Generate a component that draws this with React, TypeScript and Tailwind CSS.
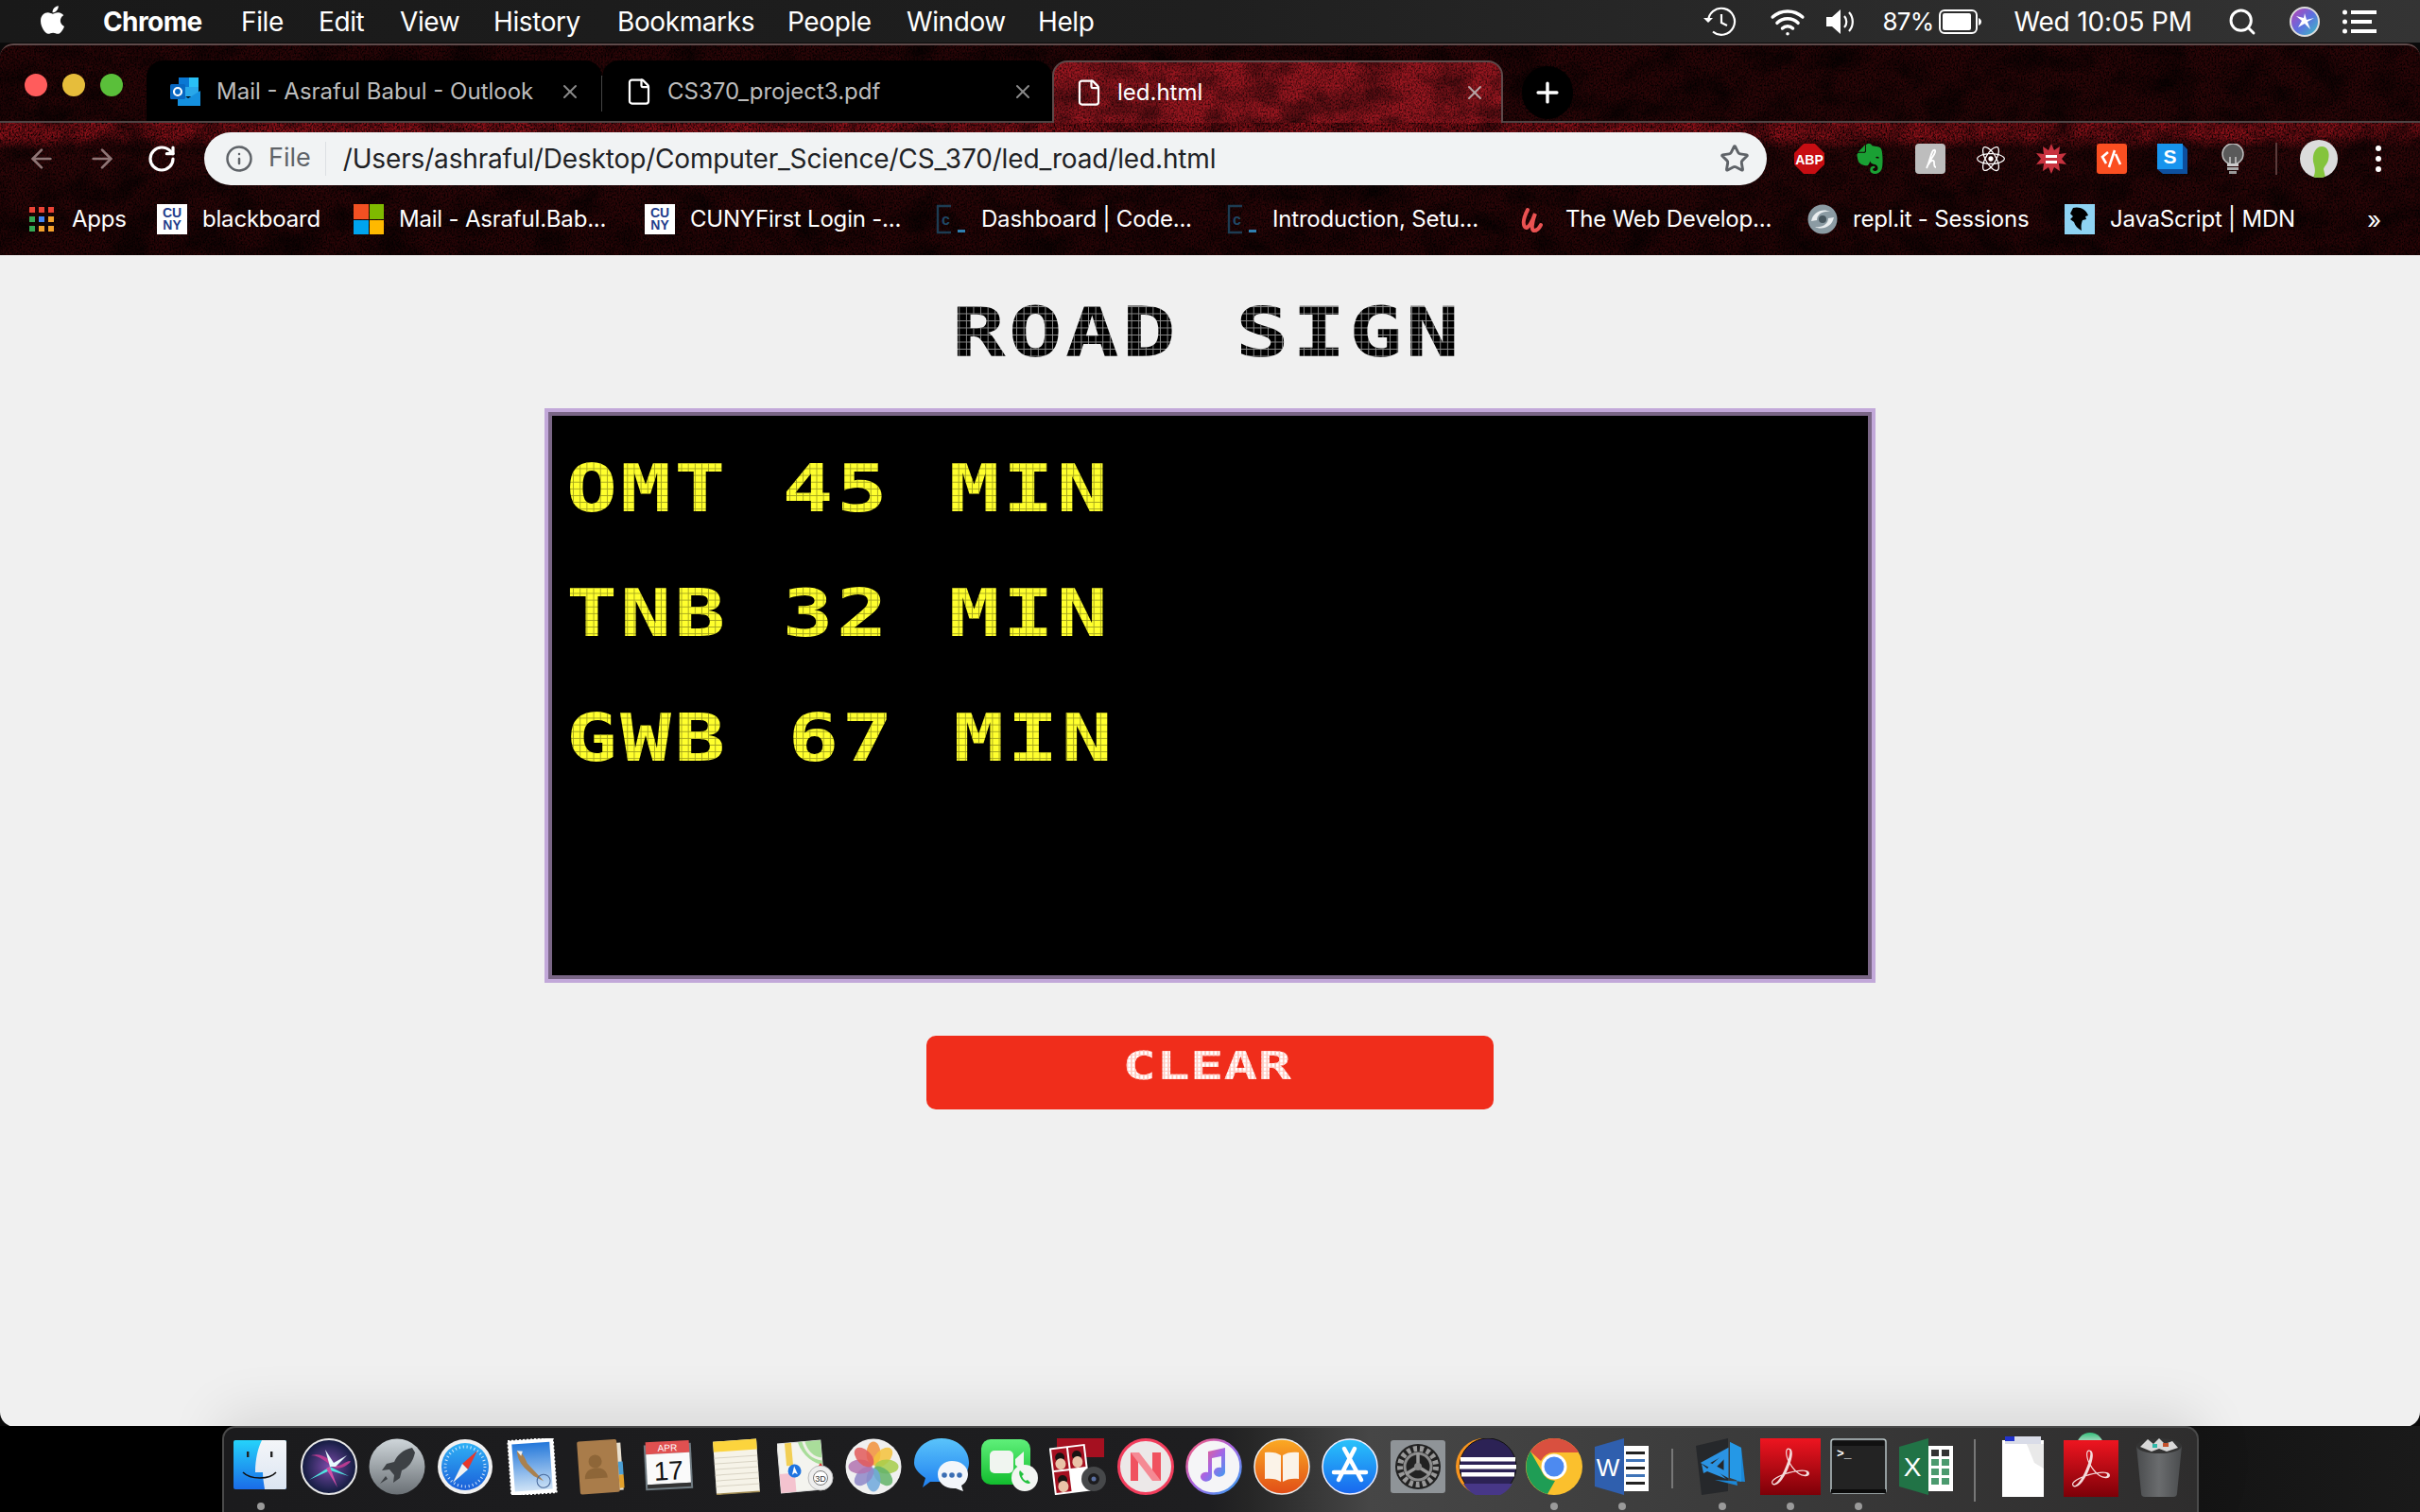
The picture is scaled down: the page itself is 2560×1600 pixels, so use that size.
import React from "react";
import { ArrowLeft, ArrowRight, RotateCw, Info, Star, X, Plus, File, Search, Wifi } from "lucide-react";
import { FaApple, FaReact } from "react-icons/fa";
import { SiEvernote, SiAdobeacrobatreader } from "react-icons/si";

function Texture({ id, soft = false }: { id: string; soft?: boolean }) {
  return (
    <svg className="absolute inset-0 w-full h-full pointer-events-none" aria-hidden="true">
      <filter id={id + "a"} x="0" y="0" width="100%" height="100%">
        <feTurbulence type="fractalNoise" baseFrequency="0.6 0.5" numOctaves="2" seed="4" />
        <feColorMatrix values={soft ? "0 0 0 0 0 0 0 0 0 0 0 0 0 0 0 1.6 0 0 0 -0.62" : "0 0 0 0 0 0 0 0 0 0 0 0 0 0 0 2.2 0 0 0 -0.8"} />
      </filter>
      <filter id={id + "b"} x="0" y="0" width="100%" height="100%">
        <feTurbulence type="fractalNoise" baseFrequency="0.025 0.035" numOctaves="4" seed="9" />
        <feColorMatrix values={soft ? "0 0 0 0 0 0 0 0 0 0 0 0 0 0 0 1.2 0 0 0 -0.45" : "0 0 0 0 0 0 0 0 0 0 0 0 0 0 0 1.4 0 0 0 -0.55"} />
      </filter>
      <rect width="100%" height="100%" filter={`url(#${id}a)`} />
      <rect width="100%" height="100%" filter={`url(#${id}b)`} />
    </svg>
  );
}

function MenuBar() {
  const items = [
    ["File", "w-[82px]"], ["Edit", "w-[86px]"], ["View", "w-[99px]"], ["History", "w-[131px]"],
    ["Bookmarks", "w-[180px]"], ["People", "w-[126px]"], ["Window", "w-[139px]"], ["Help", "w-[60px]"],
  ];
  return (
    <div className="h-[46px] shrink-0 flex items-center text-white text-[28px] bg-[linear-gradient(90deg,#191919,#1f1f1f_50%,#343434)] border-b border-[#0c0c0c]">
      <FaApple className="ml-[41px] w-[29px] h-[34px] mb-1 shrink-0" />
      <span className="ml-[39px] w-[146px] font-bold tracking-[-0.6px]">Chrome</span>
      {items.map(([t, w]) => (
        <span key={t} className={`${w} tracking-[-0.4px]`}>{t}</span>
      ))}
      <div className="ml-auto flex items-center pr-[46px]">
        <svg width="38" height="34" viewBox="0 0 38 34" fill="none" stroke="white" strokeWidth="2.2">
          <path d="M6 17a14 14 0 1 1 5 10.5" />
          <path d="M1 13l5 5 5-5" fill="white" stroke="none" />
          <path d="M20 9v9l6 3" />
        </svg>
        <Wifi className="ml-[30px] w-[44px] h-[38px] text-white" strokeWidth={2.2} />
        <svg className="ml-[18px]" width="32" height="30" viewBox="0 0 32 30" fill="white">
          <path d="M1 10h6l9-8v26l-9-8H1z" />
          <path d="M20 9a9 9 0 0 1 0 12M25 5a15 15 0 0 1 0 20" fill="none" stroke="white" strokeWidth="2.2" />
        </svg>
        <span className="ml-[28px] tracking-[-0.8px] text-[26px]">87%</span>
        <svg className="ml-[6px]" width="46" height="26" viewBox="0 0 46 26" fill="none">
          <rect x="1" y="1" width="39" height="24" rx="5" stroke="white" strokeWidth="2" />
          <rect x="4" y="4" width="30" height="18" rx="2" fill="white" />
          <path d="M42 9c2 1 3 2 3 4s-1 3-3 4z" fill="white" />
        </svg>
        <span className="ml-[33px] tracking-[-0.15px]">Wed 10:05 PM</span>
        <Search className="ml-[37px] w-[32px] h-[32px]" strokeWidth={2.2} />
        <svg className="ml-[34px]" width="32" height="32" viewBox="0 0 32 32">
          <defs>
            <linearGradient id="sm" x1="0" y1="0" x2="1" y2="1">
              <stop offset="0" stopColor="#c33fb0" /><stop offset=".5" stopColor="#5e6ee0" /><stop offset="1" stopColor="#39c5c0" />
            </linearGradient>
          </defs>
          <circle cx="16" cy="16" r="15" fill="url(#sm)" stroke="#ddd" strokeWidth="2" />
          <path d="M16 7l2 7 8-2-7 4 3 8-6-6-7 4 4-7-6-5 8 2z" fill="white" />
        </svg>
        <svg className="ml-[24px]" width="36" height="26" viewBox="0 0 36 26" fill="white">
          <circle cx="2.5" cy="3" r="2.5" /><circle cx="2.5" cy="13" r="2.5" /><circle cx="2.5" cy="23" r="2.5" />
          <rect x="9" y="1" width="27" height="4" /><rect x="9" y="11" width="22" height="4" /><rect x="9" y="21" width="27" height="4" />
        </svg>
      </div>
    </div>
  );
}

function Outlook() {
  return (
    <svg width="32" height="30" viewBox="0 0 32 30">
      <rect x="9" y="0" width="21" height="10" fill="#0a78d4" /><rect x="20" y="0" width="10" height="10" fill="#29c0f5" />
      <rect x="9" y="10" width="21" height="10" fill="#28a8ea" />
      <path d="M8 14l11 8 13-8v16H8z" fill="#1490df" />
      <rect x="0" y="7" width="16" height="16" rx="1.5" fill="#0868c2" />
      <circle cx="8" cy="15" r="4" fill="none" stroke="white" strokeWidth="2.2" />
    </svg>
  );
}

function TabStrip() {
  return (
    <div className="relative z-10 h-[84px] flex items-end pl-[155px] border-t-2 border-[#5e4a4a] rounded-t-[14px]">
      <div className="absolute left-[26px] top-[30px] flex gap-[16px]">
        <span className="w-[24px] h-[24px] rounded-full bg-[#ff5c5c]" />
        <span className="w-[24px] h-[24px] rounded-full bg-[#e6bd3b]" />
        <span className="w-[24px] h-[24px] rounded-full bg-[#5abf3a]" />
      </div>
      <div className="absolute left-0 right-0 bottom-0 h-[2px] bg-[#4d4343]" />
      <div className="relative h-[66px] w-[482px] flex items-center bg-black rounded-t-[18px] pl-[25px] pt-[2px] text-[#bdbdbd] border-b-2 border-[#4d4343]">
        <Outlook />
        <span className="ml-[17px] w-[362px] text-[24px] whitespace-nowrap">Mail - Asraful Babul - Outlook</span>
        <X className="w-[24px] h-[24px] text-[#8a8a8a]" strokeWidth={2} />
        <span className="absolute right-[-1px] top-[16px] h-[38px] w-[2px] bg-[#444]" />
      </div>
      <div className="relative h-[66px] w-[476px] flex items-center bg-black rounded-t-[18px] pl-[24px] pt-[2px] text-[#bdbdbd] border-b-2 border-[#4d4343]">
        <File className="w-[30px] h-[32px] text-white" strokeWidth={1.8} />
        <span className="ml-[15px] w-[364px] text-[24px]">CS370_project3.pdf</span>
        <X className="w-[24px] h-[24px] text-[#8a8a8a]" strokeWidth={2} />
      </div>
      <div className="relative h-[66px] w-[477px] flex items-center bg-[#99161f] rounded-t-[16px] pl-[22px] text-white border-t-2 border-x-2 border-[#5c4a4a] overflow-hidden z-10">
        <Texture id="ta" soft />
        <File className="relative w-[30px] h-[32px]" strokeWidth={1.8} />
        <span className="relative ml-[15px] w-[366px] text-[24px]">led.html</span>
        <X className="relative w-[24px] h-[24px] text-[#b5a5a5]" strokeWidth={2} />
      </div>
      <div className="relative ml-[20px] mb-[4px] w-[54px] h-[56px] rounded-full bg-black flex items-center justify-center">
        <Plus className="w-[34px] h-[34px] text-white" strokeWidth={2.4} />
      </div>
    </div>
  );
}

function Ext({ children, cls = "" }: { children: React.ReactNode; cls?: string }) {
  return <div className={`w-[32px] h-[32px] flex items-center justify-center ${cls}`}>{children}</div>;
}

function Toolbar() {
  return (
    <div className="relative z-10 h-[75px] flex items-center">
      <ArrowLeft className="ml-[28px] w-[32px] h-[32px] text-[#8f7676]" strokeWidth={2} />
      <ArrowRight className="ml-[32px] w-[32px] h-[32px] text-[#8f7676]" strokeWidth={2} />
      <RotateCw className="ml-[31px] w-[32px] h-[32px] text-white" strokeWidth={2.4} />
      <div className="ml-[29px] w-[1653px] h-[56px] bg-[#f1f3f4] rounded-full flex items-center pl-[22px] pr-[18px]">
        <Info className="w-[30px] h-[30px] text-[#5f6368]" strokeWidth={2} />
        <span className="ml-[16px] text-[27px] text-[#5f6368]">File</span>
        <span className="ml-[15px] w-[1px] h-[36px] bg-[#dde0e3]" />
        <span className="ml-[18px] text-[28px] text-[#202124] tracking-[-0.16px] whitespace-nowrap">/Users/ashraful/Desktop/Computer_Science/CS_370/led_road/led.html</span>
        <Star className="ml-auto w-[32px] h-[32px] text-[#5f6368]" strokeWidth={2.2} />
      </div>
      <div className="ml-[29px] flex items-center gap-[32px]">
        <Ext>
          <svg width="32" height="32" viewBox="0 0 32 32">
            <path d="M10 0h12l10 10v12L22 32H10L0 22V10z" fill="#c70d12" />
            <text x="16" y="21.5" textAnchor="middle" fontSize="14" fontWeight="700" fill="white" fontFamily="Liberation Sans">ABP</text>
          </svg>
        </Ext>
        <Ext><SiEvernote className="w-[32px] h-[32px] text-[#1aa034]" /></Ext>
        <Ext>
          <svg width="32" height="32" viewBox="0 0 32 32">
            <rect width="32" height="32" rx="4" fill="#bdbdbd" />
            <path d="M12 26c3-6 4-13 6-17 1-3 4-3 3 0-1 4-5 7-7 13 2-4 6-6 6-2 0 3 0 5 2 5" fill="none" stroke="white" strokeWidth="1.8" />
          </svg>
        </Ext>
        <Ext><FaReact className="w-[30px] h-[32px] text-white" /></Ext>
        <Ext>
          <svg width="32" height="32" viewBox="0 0 32 32">
            <path d="M16 0l3 7 6-4-1 8 8-1-5 6 5 6-8-1 1 8-6-4-3 7-3-7-6 4 1-8-8 1 5-6-5-6 8 1-1-8 6 4z" fill="#c8323f" />
            <rect x="10" y="12" width="12" height="3" fill="white" /><rect x="10" y="18" width="12" height="3" fill="white" />
          </svg>
        </Ext>
        <Ext>
          <svg width="32" height="32" viewBox="0 0 32 32">
            <rect width="32" height="32" rx="3" fill="#fb4f21" />
            <path d="M12 9l-6 5 4 7M19 7l-6 18M20 11l5 11" fill="none" stroke="white" strokeWidth="2.6" />
          </svg>
        </Ext>
        <Ext>
          <svg width="32" height="32" viewBox="0 0 32 32">
            <path d="M0 0h26l6 6v26H6l-6-5z" fill="#0d4f9e" />
            <rect width="27" height="27" fill="#1794ee" />
            <text x="13.5" y="21" textAnchor="middle" fontSize="21" fontWeight="700" fill="white" fontFamily="Liberation Sans">S</text>
          </svg>
        </Ext>
        <Ext>
          <svg width="26" height="32" viewBox="0 0 26 32">
            <circle cx="13" cy="11" r="11" fill="#5a5a5a" stroke="#bbb" strokeWidth="1.5" />
            <path d="M10 14v7M16 14v7" stroke="#ccc" strokeWidth="1.5" />
            <rect x="7" y="21" width="12" height="3" fill="#ccc" /><rect x="7" y="25" width="12" height="3" fill="#aaa" /><rect x="9" y="29" width="8" height="3" fill="#999" />
          </svg>
        </Ext>
      </div>
      <span className="ml-[29px] w-[2px] h-[34px] bg-[#5a3b3b]" />
      <div className="ml-[24px] relative w-[40px] h-[40px] rounded-full bg-[#dcdcdc] overflow-hidden">
        <svg width="40" height="40" viewBox="0 0 40 40"><path d="M14 40c3-6 2-10 0-17-1-9 3-16 9-16s9 6 7 14c-1 5-4 6-5 10l2 9z" fill="#84c43c" /></svg>
      </div>
      <div className="ml-[40px] flex flex-col gap-[5px]">
        <span className="w-[6px] h-[6px] rounded-full bg-white" />
        <span className="w-[6px] h-[6px] rounded-full bg-white" />
        <span className="w-[6px] h-[6px] rounded-full bg-white" />
      </div>
    </div>
  );
}

function Cuny() {
  return (
    <div className="w-[32px] h-[32px] shrink-0 bg-white flex flex-col items-center justify-center text-[#1f3d8c] font-bold text-[14px] leading-[13px] font-['Liberation_Sans',sans-serif]">
      <span>CU</span><span>NY</span>
    </div>
  );
}
function Ms() {
  return (
    <div className="w-[32px] h-[32px] shrink-0 grid grid-cols-2 gap-[1px]">
      <span className="bg-[#f25022]" /><span className="bg-[#7fba00]" /><span className="bg-[#00a4ef]" /><span className="bg-[#ffb900]" />
    </div>
  );
}
function Cc() {
  return (
    <svg className="shrink-0" width="32" height="32" viewBox="0 0 32 32" fill="none">
      <path d="M16 2H2v28h14" stroke="#1d3c52" strokeWidth="2.4" />
      <text x="6" y="22" fontSize="16" fill="#1f4866" fontFamily="Liberation Sans" fontWeight="700">c</text>
      <rect x="23" y="27" width="8" height="3" fill="#2f7fb0" />
    </svg>
  );
}
function Apps() {
  const c = ["#ea4335", "#ea4335", "#ea4335", "#34a853", "#4285f4", "#f4a12c", "#34a853", "#f4a12c", "#f4a12c"];
  return (
    <div className="grid grid-cols-3 gap-[4px] w-[26px] shrink-0 mx-[3px]">
      {c.map((x, i) => <span key={i} className="w-[6px] h-[6px]" style={{ background: x }} />)}
    </div>
  );
}
function Udemy() {
  return (
    <svg className="shrink-0" width="32" height="32" viewBox="0 0 32 32" fill="none" stroke="#ea5252" strokeWidth="4" strokeLinecap="round">
      <path d="M8 6c-4 8-6 14-3 18s8-6 11-14c-3 8-5 18-1 18s6-4 7-6" />
    </svg>
  );
}
function Repl() {
  return (
    <svg className="shrink-0" width="32" height="32" viewBox="0 0 32 32">
      <circle cx="16" cy="16" r="15.5" fill="#8b9ba3" />
      <path d="M4 18C6 8 16 4 24 8 16 7 10 11 10 17M28 14c-2 10-12 14-20 10 8 1 14-3 14-9" fill="#e9edef" />
      <circle cx="16" cy="16" r="4" fill="#47565e" />
    </svg>
  );
}
function Mdn() {
  return (
    <div className="w-[32px] h-[32px] shrink-0 bg-[#8fd3f3] flex items-center justify-center">
      <svg width="22" height="26" viewBox="0 0 22 26"><path d="M4 1c6-2 14 1 16 8l-3 1 1 3-4 1c-1 3-2 6-1 11-4-2-7-5-8-9L1 13l3-3-3-3z" fill="black" /></svg>
    </div>
  );
}

function BookmarkBar() {
  const items: [React.ReactNode, string, string][] = [
    [<Apps />, "Apps", "w-[138px]"],
    [<Cuny />, "blackboard", "w-[208px]"],
    [<Ms />, "Mail - Asraful.Bab...", "w-[308px]"],
    [<Cuny />, "CUNYFirst Login -...", "w-[308px]"],
    [<Cc />, "Dashboard | Code...", "w-[308px]"],
    [<Cc />, "Introduction, Setu...", "w-[310px]"],
    [<Udemy />, "The Web Develop...", "w-[304px]"],
    [<Repl />, "repl.it - Sessions", "w-[272px]"],
    [<Mdn />, "JavaScript | MDN", "w-[320px]"],
  ];
  return (
    <div className="relative z-10 h-[65px] flex items-center pl-[28px] pb-[11px] text-white">
      {items.map(([icon, label, w], i) => (
        <div key={i} className={`${w} shrink-0 flex items-center gap-[16px] whitespace-nowrap`}>
          {icon}
          <span className="text-[24px] tracking-[-0.2px]">{label}</span>
        </div>
      ))}
      <span className="text-[26px]">»</span>
    </div>
  );
}

const ledGrid =
  "inline-block whitespace-pre font-['DejaVu_Sans_Mono',monospace] font-bold text-transparent bg-clip-text scale-x-[1.3]";

function Page() {
  const rows: [string, string, string, string, string][] = [
    ["OMT", "45", "MIN", "", "tracking-[6px]"],
    ["TNB", "32", "MIN", "", "tracking-[6px]"],
    ["GWB", "67", "MIN", "tracking-[7px]", "tracking-[5px]"],
  ];
  return (
    <div className="flex-1 min-h-0 bg-[#f0f0f0] rounded-b-[16px] flex flex-col items-center">
      <h1 className="mt-[39px] h-[85px] leading-[85px] text-[73px] tracking-[2.2px] mr-[6px] bg-black bg-[linear-gradient(90deg,#8a8a8a_1px,transparent_1px),linear-gradient(#8a8a8a_1px,transparent_1px)] [background-size:5.85px_7.5px] inline-block whitespace-pre font-['DejaVu_Sans_Mono',monospace] font-bold text-transparent bg-clip-text scale-x-[1.3]">
        ROAD SIGN
      </h1>
      <div className="mt-[38px] w-[1408px] h-[608px] border-4 border-[#c2a8d9] shrink-0">
        <div className="w-full h-full border-4 border-[#7a6686] bg-black pl-[15px] pt-[27px] flex flex-col items-start">
          {rows.map(([a, b, c, s1, s2]) => (
            <div key={a} className="h-[132px] w-full shrink-0">
              <span className={`${ledGrid} origin-left text-[69px] leading-[100px] tracking-[2.4px] bg-[#ffff2e] bg-[linear-gradient(90deg,#a3a31c_1px,transparent_1px),linear-gradient(#a3a31c_1px,transparent_1px)] [background-size:5.5px_7.14px]`}>
                {a}<span className={s1}> </span>{b}<span className={s2}> </span>{c}
              </span>
            </div>
          ))}
        </div>
      </div>
      <button className="mt-[56px] w-[600px] h-[78px] rounded-[10px] bg-[#f02d1b] flex items-start justify-center shrink-0">
        <span className="mt-[7px] mr-[6px] leading-[50px] text-[41px] inline-block whitespace-pre font-['DejaVu_Sans_Mono',monospace] font-bold text-transparent bg-clip-text scale-x-[1.45] bg-white bg-[linear-gradient(90deg,#ffc9c0_1px,transparent_1px),linear-gradient(#ffc9c0_1px,transparent_1px)] [background-size:3px_4.3px]">
          CLEAR
        </span>
      </button>
    </div>
  );
}

/* ---------- dock icons ---------- */
const Sv = ({ children }: { children: React.ReactNode }) => (
  <svg width="60" height="60" viewBox="0 0 60 60">{children}</svg>
);

const Finder = () => (
  <Sv>
    <defs>
      <linearGradient id="f1" x1="0" y1="0" x2="0" y2="1"><stop offset="0" stopColor="#25d3fb" /><stop offset="1" stopColor="#1a6ce8" /></linearGradient>
      <linearGradient id="f2" x1="0" y1="0" x2="0" y2="1"><stop offset="0" stopColor="#f4f6f9" /><stop offset="1" stopColor="#dbe5f2" /></linearGradient>
    </defs>
    <rect x="1" y="2" width="56" height="52" rx="2" fill="url(#f1)" />
    <path d="M31 2h24a2 2 0 0 1 2 2v48a2 2 0 0 1-2 2H34c-1-7-2-12-2-18h-8C24 22 27 10 31 2z" fill="url(#f2)" />
    <rect x="15" y="14" width="2.4" height="6" fill="#222" /><rect x="40" y="14" width="2.4" height="6" fill="#222" />
    <path d="M11 36c8 8 28 8 35 0" fill="none" stroke="#111" strokeWidth="1.6" />
  </Sv>
);
const Siri = () => (
  <Sv>
    <defs>
      <radialGradient id="s1"><stop offset="0" stopColor="#7c4aa8" /><stop offset=".7" stopColor="#2f2a5f" /><stop offset="1" stopColor="#101a3c" /></radialGradient>
    </defs>
    <circle cx="30" cy="30" r="29" fill="url(#s1)" stroke="#e8e8e8" strokeWidth="2" />
    <path d="M8 20c12-8 24 4 28 8s12-4 16-4-10 12-18 6S14 14 8 20z" fill="#c43d95" opacity=".9" />
    <path d="M9 44l22-14 20 10-20-6z" fill="#50e6e0" />
    <path d="M31 30l8 22-12-20z" fill="#d24fa6" />
    <path d="M31 30L26 12l9 14 14-8-12 12z" fill="#e8fbff" />
  </Sv>
);
const Rocket = () => (
  <Sv>
    <defs><linearGradient id="r1" x1="0" y1="0" x2="0" y2="1"><stop offset="0" stopColor="#cfd6da" /><stop offset="1" stopColor="#6a7075" /></linearGradient></defs>
    <circle cx="30" cy="30" r="29.5" fill="url(#r1)" />
    <path d="M46 10c-10 2-16 8-19 15l-8 2-5 7 8-1 5 6-1 8 7-5 2-8c7-3 12-9 14-19z" fill="#3d4145" />
    <path d="M18 40l-6 8 8-5z" fill="#3d4145" />
  </Sv>
);
const Safari = () => (
  <Sv>
    <defs><linearGradient id="sa" x1="0" y1="0" x2="0" y2="1"><stop offset="0" stopColor="#2fb0f5" /><stop offset="1" stopColor="#1b5fd9" /></linearGradient></defs>
    <circle cx="30" cy="30" r="29" fill="#f1f1f1" />
    <circle cx="30" cy="30" r="25" fill="url(#sa)" />
    <circle cx="30" cy="30" r="21" fill="none" stroke="white" strokeWidth="3" strokeDasharray="1 3" opacity=".8" />
    <path d="M43 13L27 27l6 6z" fill="#e6382c" /><path d="M17 47l10-20 6 6z" fill="#f2f2f2" />
  </Sv>
);
const MailStamp = () => (
  <Sv>
    <g transform="rotate(-4 30 30)">
      <rect x="5" y="1" width="48" height="58" fill="white" stroke="white" strokeWidth="1.5" strokeDasharray="2 2" />
      <defs><linearGradient id="m1" x1="0" y1="0" x2="0" y2="1"><stop offset="0" stopColor="#2478da" /><stop offset="1" stopColor="#cfe3f6" /></linearGradient></defs>
      <rect x="9" y="5" width="40" height="50" fill="url(#m1)" />
      <path d="M14 12c6 2 8 8 10 14l8 10 8 10-10-6-8-8c-5-6-8-12-8-20z" fill="#a9814f" />
      <path d="M14 12l6 1-2 5z" fill="#eee" />
      <circle cx="40" cy="46" r="7" fill="none" stroke="#47689a" strokeWidth="1" />
    </g>
  </Sv>
);
const Contacts = () => (
  <Sv>
    <g transform="rotate(-4 30 30)">
      <rect x="45" y="6" width="7" height="50" fill="#e8e0d0" />
      <rect x="48" y="26" width="5" height="14" fill="#4c9fd4" /><rect x="48" y="40" width="5" height="14" fill="#e2a12d" />
      <rect x="6" y="2" width="42" height="56" rx="2" fill="#a97c4a" />
      <circle cx="24" cy="24" r="7" fill="#8e6638" /><path d="M12 42c0-8 6-11 12-11s12 3 12 11z" fill="#8e6638" />
    </g>
  </Sv>
);
const Calendar = () => (
  <Sv>
    <g transform="rotate(-3 30 30)">
      <rect x="4" y="6" width="50" height="48" fill="#6f7b82" />
      <rect x="6" y="3" width="46" height="13" fill="#e05050" />
      <text x="29" y="13.5" textAnchor="middle" fontSize="10" fill="white" fontFamily="Liberation Sans">APR</text>
      <rect x="6" y="16" width="46" height="32" fill="#fafafa" />
      <text x="29" y="44" textAnchor="middle" fontSize="28" fill="#111" fontFamily="Liberation Sans">17</text>
      <rect x="6" y="48" width="46" height="4" fill="#333" />
    </g>
  </Sv>
);
const Notes = () => (
  <Sv>
    <g transform="rotate(-4 30 30)">
      <rect x="6" y="2" width="46" height="56" fill="#f6f3e8" />
      <rect x="6" y="2" width="46" height="11" fill="#fcd43d" />
      {[19, 25, 31, 37, 43, 49].map((y) => <rect key={y} x="6" y={y} width="46" height="1" fill="#d8d3c4" />)}
      <rect x="6" y="57" width="46" height="1.5" fill="#a08a50" />
    </g>
  </Sv>
);
const Maps = () => (
  <Sv>
    <g transform="rotate(-5 25 28)">
      <rect x="2" y="4" width="46" height="52" fill="#f4f4ef" stroke="#ddd" />
      <path d="M24 4h24v26C40 28 28 20 24 4z" fill="#a9dd9a" />
      <path d="M30 4c2 10 8 18 18 20" fill="none" stroke="#f0f0e8" strokeWidth="3" />
      <path d="M10 4h7v24h-7z" fill="#f2cf55" />
      <path d="M2 36h16v20H2z" fill="#f4c3cf" />
      <circle cx="18" cy="34" r="7" fill="#1e74e0" /><path d="M18 29l3 9-3-2-3 2z" fill="white" />
    </g>
    <circle cx="46" cy="42" r="13" fill="#eeeeee" stroke="#bbb" />
    <circle cx="46" cy="42" r="7.5" fill="white" stroke="#777" />
    <text x="46" y="45.5" textAnchor="middle" fontSize="9" fill="#333" fontFamily="Liberation Sans">3D</text>
    <path d="M46 26l2 3h-4z" fill="#d33" />
  </Sv>
);
const Photos = () => {
  const c = ["#f2913a", "#f5c23b", "#a6cd4a", "#63b368", "#6ea8dc", "#8e87c8", "#b273b0", "#e25a5a"];
  return (
    <Sv>
      <circle cx="30" cy="30" r="29.5" fill="#f0f0f0" />
      {c.map((x, i) => (
        <ellipse key={i} cx="30" cy="16" rx="7.5" ry="12.5" fill={x} opacity=".85" transform={`rotate(${i * 45} 30 30)`} />
      ))}
    </Sv>
  );
};
const Messages = () => (
  <Sv>
    <defs><linearGradient id="me" x1="0" y1="0" x2="0" y2="1"><stop offset="0" stopColor="#5ac4fb" /><stop offset="1" stopColor="#1f7ff0" /></linearGradient></defs>
    <path d="M30 0c16 0 29 11 29 26 0 8-5 16-12 20H18l-8 6 3-10C5 37 1 31 1 26 1 11 14 0 30 0z" fill="url(#me)" />
    <path d="M41 24c10 0 17 6 17 14 0 5-3 10-7 12l2 6-8-3c-10 1-19-5-19-15 0-8 7-14 15-14z" fill="#f3f6fa" />
    <circle cx="33" cy="39" r="2.8" fill="#3a6db3" /><circle cx="41" cy="39" r="2.8" fill="#3a6db3" /><circle cx="49" cy="39" r="2.8" fill="#3a6db3" />
  </Sv>
);
const Facetime = () => (
  <Sv>
    <defs><linearGradient id="ft" x1="0" y1="0" x2="0" y2="1"><stop offset="0" stopColor="#5ff07a" /><stop offset="1" stopColor="#12bd2e" /></linearGradient></defs>
    <rect x="0" y="1" width="52" height="48" rx="10" fill="url(#ft)" />
    <rect x="9" y="13" width="25" height="24" rx="5" fill="#f0f5f0" />
    <path d="M36 22l9-8v22l-9-8z" fill="#f0f5f0" />
    <circle cx="46" cy="42" r="14" fill="#f2f5f2" />
    <path d="M41 34c-2 2 0 8 3 11s7 4 8 2l-3-3-2 1c-2-1-3-3-4-5l2-2z" fill="#22c23f" />
  </Sv>
);
const PhotoBooth = () => (
  <Sv>
    <rect x="8" y="0" width="50" height="20" fill="#a51020" />
    <g transform="rotate(-7 22 35)">
      <rect x="3" y="8" width="38" height="50" fill="white" />
      {[[5, 10], [23, 10], [5, 34]].map(([x, y], i) => (
        <g key={i}>
          <rect x={x} y={y} width="16" height="22" fill="#a51020" />
          <circle cx={x + 8} cy={y + 9} r="5" fill="#1a1412" /><ellipse cx={x + 8} cy={y + 16} rx="5.5" ry="6" fill="#e9c3a8" />
        </g>
      ))}
    </g>
    <circle cx="47" cy="43" r="13" fill="#46484a" /><circle cx="47" cy="43" r="6" fill="#1c1c1e" /><circle cx="47" cy="43" r="2.5" fill="#5a6fa0" />
  </Sv>
);
const News = () => (
  <Sv>
    <circle cx="30" cy="30" r="28.5" fill="#ece8e8" stroke="#f23d5c" strokeWidth="3" />
    <path d="M14 15h8v30h-8z" fill="#f0525f" /><path d="M37 15h9v30h-9z" fill="#f0525f" />
    <path d="M14 15h9l23 30h-9z" fill="#f58a94" />
  </Sv>
);
const Music = () => (
  <Sv>
    <defs><linearGradient id="mu" x1="0" y1="0" x2="1" y2="1"><stop offset="0" stopColor="#fb5c74" /><stop offset=".5" stopColor="#a565e6" /><stop offset="1" stopColor="#2ea4f2" /></linearGradient></defs>
    <circle cx="30" cy="30" r="28.5" fill="#f5f5f7" stroke="url(#mu)" strokeWidth="2.5" />
    <path d="M24 14l18-4v26a6 5 0 1 1-4-5V19l-10 2v20a6 5 0 1 1-4-5z" fill="url(#mu)" />
  </Sv>
);
const Books = () => (
  <Sv>
    <defs><linearGradient id="bo" x1="0" y1="0" x2="0" y2="1"><stop offset="0" stopColor="#fbaa23" /><stop offset="1" stopColor="#e14d17" /></linearGradient></defs>
    <circle cx="30" cy="30" r="29" fill="url(#bo)" stroke="#eee" strokeWidth="1.5" />
    <path d="M29 18c-4-3-10-4-17-3v28c6-1 13 0 17 3zM31 18c4-3 10-4 17-3v28c-6-1-13 0-17 3z" fill="#fbf3e8" />
  </Sv>
);
const AppStore = () => (
  <Sv>
    <defs><linearGradient id="ap" x1="0" y1="0" x2="0" y2="1"><stop offset="0" stopColor="#29c3fb" /><stop offset="1" stopColor="#1866ee" /></linearGradient></defs>
    <circle cx="30" cy="30" r="29" fill="url(#ap)" stroke="#eef" strokeWidth="1.5" />
    <path d="M35 11L18 44M24 11l18 33M13 36h34" fill="none" stroke="white" strokeWidth="4.5" strokeLinecap="round" />
  </Sv>
);
const SysPrefs = () => (
  <Sv>
    <rect x="1" y="2" width="58" height="56" rx="3" fill="#8f9498" />
    <circle cx="30" cy="30" r="24" fill="#222" />
    <circle cx="30" cy="30" r="19" fill="none" stroke="#9a9a9a" strokeWidth="6" strokeDasharray="4 3" />
    <circle cx="30" cy="30" r="14" fill="none" stroke="#8b8b8b" strokeWidth="3" />
    <path d="M30 30V15M30 30l13 8M30 30l-13 8" stroke="#999" strokeWidth="3.5" />
    <circle cx="30" cy="30" r="4" fill="#888" />
  </Sv>
);
const Eclipse = () => (
  <svg width="68" height="60" viewBox="0 0 68 60">
    <circle cx="32" cy="30" r="30" fill="#f7941e" />
    <circle cx="36" cy="30" r="30" fill="#2c2255" stroke="#111" strokeWidth="1" />
    <path d="M10 48a30 30 0 0 0 52 0z" fill="#473788" />
    <rect x="7" y="20" width="58" height="4.5" fill="white" /><rect x="6" y="28" width="60" height="4.5" fill="white" /><rect x="8" y="36" width="56" height="4.5" fill="white" />
  </svg>
);
const Chrome = () => (
  <Sv>
    <circle cx="30" cy="30" r="30" fill="#fbc02d" />
    <path d="M30 0a30 30 0 0 1 26 15H30a15 15 0 0 0-14 9L5 14A30 30 0 0 1 30 0z" fill="#d9503f" />
    <path d="M5 14l12 21a15 15 0 0 0 14 10L23 59A30 30 0 0 1 5 14z" fill="#1f9d55" />
    <circle cx="30" cy="30" r="13.5" fill="white" /><circle cx="30" cy="30" r="10.5" fill="#4d8af0" />
  </Sv>
);
const Word = () => (
  <Sv>
    <rect x="30" y="8" width="28" height="48" fill="white" />
    {[14, 22, 30, 38, 46].map((y) => <rect key={y} x="34" y={y} width="20" height="3" fill={y % 16 === 14 ? "#222" : "#3f74b8"} />)}
    <path d="M1 9L32 0v60L1 51z" fill="#2f5fae" />
    <text x="15" y="40" textAnchor="middle" fontSize="26" fill="white" fontFamily="Liberation Sans">W</text>
  </Sv>
);
const Excel = () => (
  <Sv>
    <rect x="30" y="8" width="28" height="48" fill="white" />
    {[12, 22, 32, 42].map((y) => (
      <g key={y}><rect x="35" y={y} width="8" height="7" fill={y === 12 ? "#333" : "#4b9a6e"} /><rect x="46" y={y} width="8" height="7" fill={y === 12 ? "#333" : "#4b9a6e"} /></g>
    ))}
    <path d="M1 9L32 0v60L1 51z" fill="#217346" />
    <text x="15" y="40" textAnchor="middle" fontSize="28" fill="white" fontFamily="Liberation Sans">X</text>
  </Sv>
);
const VSCode = () => (
  <Sv>
    <path d="M2 8L36 0v56L8 60z" fill="#26282b" />
    <path d="M38 4l12 6 4 36-32-2 24 6z" fill="#1c87d6" />
    <path d="M38 4v38l12 4V10z" fill="#2598e6" />
    <path d="M34 14L14 32l-6-5 2 10 4-2 20 8-12-11 12-12z" fill="#2b93e3" />
    <path d="M12 26l22-12v24z" fill="none" stroke="#2b93e3" strokeWidth="5" />
  </Sv>
);
const Acrobat = ({ w }: { w: string }) => (
  <div className={`relative flex items-center justify-center h-[60px] ${w}`}>
    <div className="absolute inset-0 bg-[linear-gradient(180deg,#ee1520,#7d0008)]" />
    <SiAdobeacrobatreader className="relative w-[40px] h-[42px] text-[#f4dada]" />
  </div>
);
const Terminal = () => (
  <Sv>
    <rect x="1" y="1" width="58" height="57" rx="3" fill="#232323" stroke="#b8c4c6" strokeWidth="1.5" />
    <rect x="3" y="3" width="54" height="5" fill="#111" />
    <text x="7" y="20" fontSize="13" fontWeight="700" fill="white" fontFamily="Liberation Mono">&gt;_</text>
    <rect x="1" y="54" width="58" height="4" fill="#0b0b0b" />
  </Sv>
);
const Doc = () => (
  <svg width="44" height="64" viewBox="0 0 44 64">
    <rect x="0" y="4" width="44" height="60" fill="white" />
    <path d="M3 0h38v30L26 8H3z" fill="#d9dce8" />
    <rect x="3" y="0" width="10" height="5" fill="#2233cc" />
    <path d="M26 8l8 20 10 6V8z" fill="#e9e9e9" />
  </svg>
);
const Acrobat2 = () => (
  <div className="relative mt-[2px] w-[58px] h-[58px]">
    <div className="absolute left-[14px] -top-[8px] w-[28px] h-[14px] rounded-t-full bg-[linear-gradient(180deg,#34c07b,#e5e5e5)]" />
    <Acrobat w="w-[58px]" />
  </div>
);
const Trash = () => (
  <svg width="50" height="64" viewBox="0 0 50 64">
    <defs><linearGradient id="tr" x1="0" y1="0" x2="1" y2="0"><stop offset="0" stopColor="#4a4c4e" /><stop offset=".5" stopColor="#6a6c6e" /><stop offset="1" stopColor="#4a4c4e" /></linearGradient></defs>
    <path d="M1 10h48l-5 50a4 4 0 0 1-4 4H10a4 4 0 0 1-4-4z" fill="url(#tr)" />
    <ellipse cx="25" cy="10" rx="24" ry="8" fill="#333" />
    <path d="M5 11l8-8 6 5 6-6 6 6 8-3 6 7-12 4-8-3-8 3z" fill="#d8d8d8" />
    <rect x="18" y="8" width="5" height="4" fill="#31b8a8" /><rect x="29" y="7" width="6" height="4" fill="#c2502c" />
  </svg>
);

function Slot({ children, dot = false }: { children: React.ReactNode; dot?: boolean }) {
  return (
    <div className="w-[72px] shrink-0 flex flex-col items-center">
      <div className="h-[62px] flex items-center justify-center">{children}</div>
      <span className={`mt-[7px] w-[8px] h-[8px] rounded-full ${dot ? "bg-[#9a9a9a]" : "bg-transparent"}`} />
    </div>
  );
}

function Dock() {
  return (
    <div className="relative z-20 -mt-[1px] h-[91px] bg-[linear-gradient(90deg,#000_0%,#000_60%,#1a1a1a_100%)] overflow-visible">
      <div className="ml-[235px] w-[2091px] h-[91px] pl-[3px] pt-[10px] flex items-start rounded-t-[14px] border-t-2 border-x-2 border-[#4a4a4a] bg-[linear-gradient(90deg,#1b1b1d_0%,#1e1e20_50%,#262626_52%,#464646_58%,#3c3c3c_75%,#2e2d2d_100%)] shadow-[0_-10px_60px_rgba(0,0,0,0.12)]">
        <Slot dot><Finder /></Slot><Slot><Siri /></Slot><Slot><Rocket /></Slot><Slot><Safari /></Slot>
        <Slot><MailStamp /></Slot><Slot><Contacts /></Slot><Slot><Calendar /></Slot><Slot><Notes /></Slot>
        <Slot><Maps /></Slot><Slot><Photos /></Slot><Slot><Messages /></Slot><Slot><Facetime /></Slot>
        <Slot><PhotoBooth /></Slot><Slot><News /></Slot><Slot><Music /></Slot><Slot><Books /></Slot>
        <Slot><AppStore /></Slot><Slot><SysPrefs /></Slot><Slot><Eclipse /></Slot><Slot dot><Chrome /></Slot>
        <Slot dot><Word /></Slot>
        <div className="w-[34px] shrink-0 flex justify-center pt-[12px]"><span className="w-[2px] h-[42px] bg-[#777]" /></div>
        <Slot dot><VSCode /></Slot><Slot dot><Acrobat w="w-[64px]" /></Slot><Slot dot><Terminal /></Slot><Slot><Excel /></Slot>
        <div className="w-[30px] shrink-0 flex justify-center pt-[2px]"><span className="w-[2px] h-[66px] bg-[#777]" /></div>
        <Slot><Doc /></Slot><Slot><Acrobat2 /></Slot><Slot><Trash /></Slot>
      </div>
    </div>
  );
}

export default function App() {
  return (
    <div className="w-[2560px] h-[1600px] overflow-hidden flex flex-col bg-[#0a0a0a] font-['Inter',sans-serif]">
      <MenuBar />
      <div className="relative h-[224px] shrink-0 rounded-t-[14px] overflow-hidden bg-[linear-gradient(180deg,#2c0507_0,#2c0507_84px,#8c1018_84px,#8c1018_98px,#300608_112px,#280406_224px)]">
        <Texture id="hd" />
        <TabStrip />
        <Toolbar />
        <BookmarkBar />
      </div>
      <Page />
      <Dock />
    </div>
  );
}
